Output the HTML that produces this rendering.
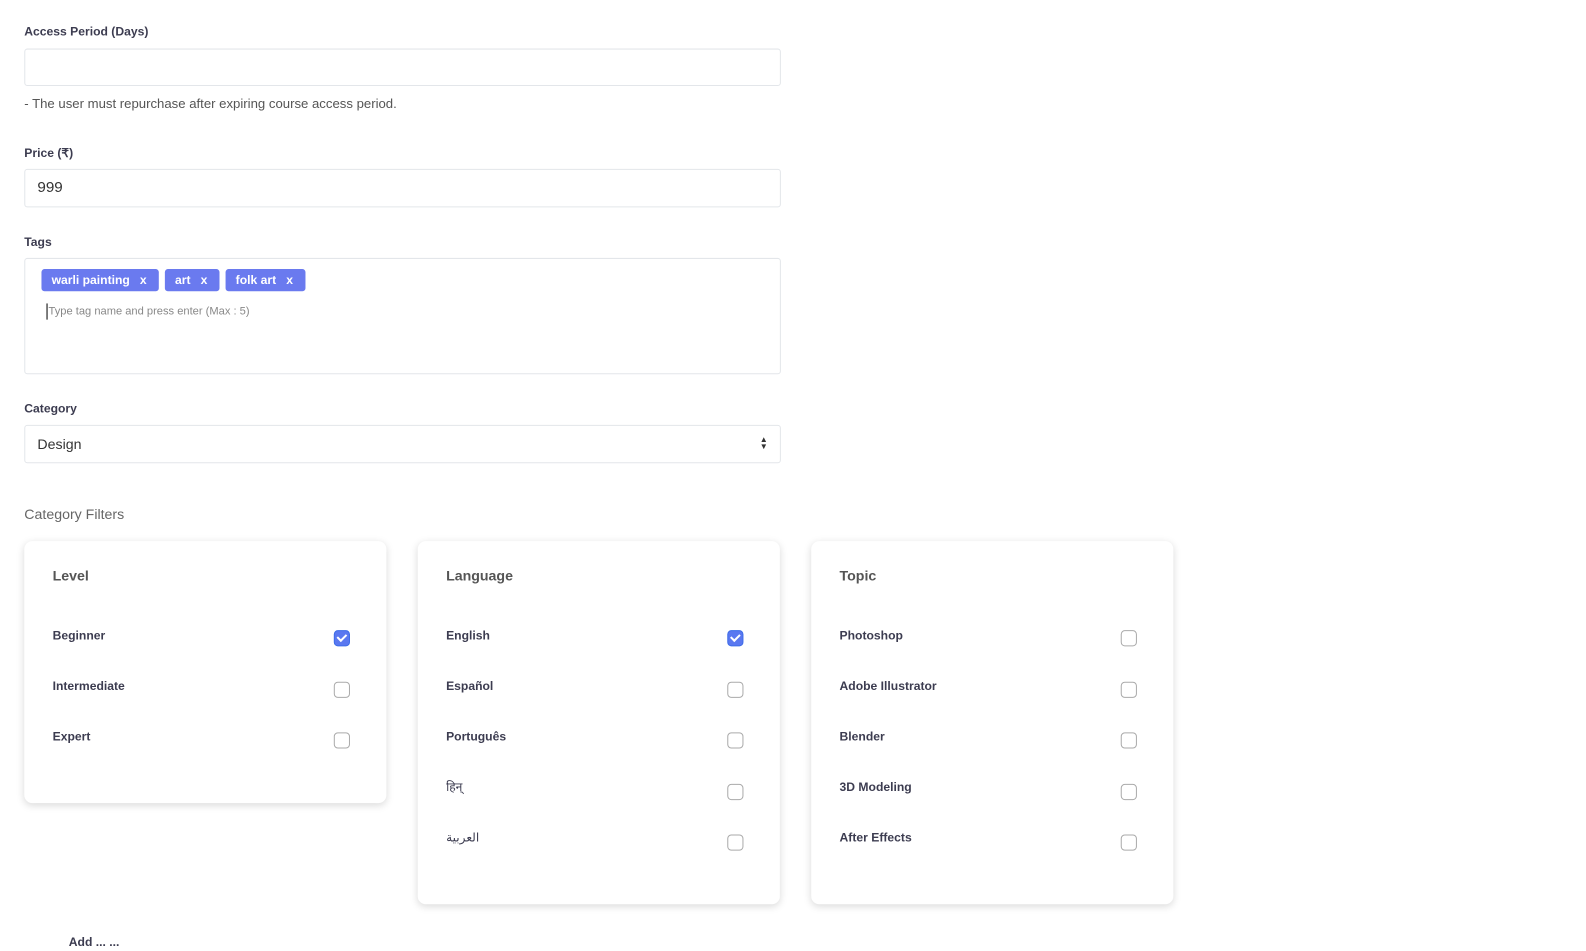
<!DOCTYPE html><html><head><meta charset="utf-8"><style>
*{box-sizing:border-box;margin:0;padding:0}
body{width:1586px;height:940px;background:#fff;font-family:"Liberation Sans","Noto Sans CJK SC",sans-serif;color:#333;position:relative;overflow:hidden}
#w{position:absolute;left:0;top:0;width:1586px;height:940px;transform:scale(1.0115);transform-origin:0 0}
.a{position:absolute}
.lbl{font-size:12px;font-weight:bold;color:#3c3c50}
.inp{position:absolute;left:24px;width:748px;border:1px solid #e3e6ea;border-radius:3px;background:#fff}
.tag{position:absolute;top:266px;height:22px;background:#6a7aef;color:#fff;font-size:12px;font-weight:bold;border-radius:3px;line-height:22px;padding-left:10px}
.card{position:absolute;width:358px;background:#fff;border-radius:8px;box-shadow:0 2px 8px rgba(0,0,0,.15)}
.card h4{position:absolute;left:28px;top:26px;font-size:14px;color:#555;font-weight:bold}
.row{position:absolute;left:28px;font-size:12px;font-weight:bold;color:#3c3c50}
.cb{position:absolute;left:306px;width:16px;height:16px;border:1.5px solid #aaa;border-radius:4px}
.cb.on{background:#5a78f0;border-color:#3d6ce8}
.cb.on::after{content:"";position:absolute;left:4px;top:1px;width:4px;height:7px;border:solid #fff;border-width:0 2px 2px 0;transform:rotate(45deg)}
</style></head><body><div id="w">
<div class="a lbl" style="left:24px;top:24px">Access Period (Days)</div>
<div class="inp" style="top:48px;height:37px"></div>
<div class="a" style="left:24px;top:95px;font-size:13px;color:#555">- The user must repurchase after expiring course access period.</div>
<div class="a lbl" style="left:24px;top:144px">Price (₹)</div>
<div class="inp" style="top:167px;height:38px;padding:9px 12px;font-size:15px;color:#333">999</div>
<div class="a lbl" style="left:24px;top:232px">Tags</div>
<div class="inp" style="top:255px;height:115px"></div>
<div class="tag" style="left:41px;width:116px">warli painting &nbsp;&nbsp;x</div>
<div class="tag" style="left:163px;width:54px">art &nbsp;&nbsp;x</div>
<div class="tag" style="left:223px;width:79px">folk art &nbsp;&nbsp;x</div>
<div class="a" style="left:46px;top:300px;width:1px;height:16px;background:#000"></div>
<div class="a" style="left:48px;top:302px;font-size:11px;color:#888">Type tag name and press enter (Max : 5)</div>
<div class="a lbl" style="left:24px;top:397px">Category</div>
<div class="inp" style="top:420px;height:38px;padding:10px 12px;font-size:14px;color:#333">Design
<span style="position:absolute;right:12px;top:10px;font-size:8px;line-height:7px;color:#333">▲<br>▼</span></div>
<div class="a" style="left:24px;top:500px;font-size:14px;color:#666">Category Filters</div>

<div class="card" style="left:24px;top:535px;height:259px"><h4>Level</h4>
<div class="row" style="top:86px">Beginner</div><div class="cb on" style="top:88px"></div>
<div class="row" style="top:136px">Intermediate</div><div class="cb" style="top:139px"></div>
<div class="row" style="top:186px">Expert</div><div class="cb" style="top:189px"></div>
</div>
<div class="card" style="left:413px;top:535px;height:359px"><h4>Language</h4>
<div class="row" style="top:86px">English</div><div class="cb on" style="top:88px"></div>
<div class="row" style="top:136px">Español</div><div class="cb" style="top:139px"></div>
<div class="row" style="top:186px">Português</div><div class="cb" style="top:189px"></div>
<div class="row" style="top:234px;font-family:'DejaVu Sans',sans-serif;font-weight:normal">हिन्</div><div class="cb" style="top:240px"></div>
<div class="row" style="top:286px;font-family:'DejaVu Sans',sans-serif;font-weight:normal">العربية</div><div class="cb" style="top:290px"></div>
</div>
<div class="card" style="left:802px;top:535px;height:359px"><h4>Topic</h4>
<div class="row" style="top:86px">Photoshop</div><div class="cb" style="top:88px"></div>
<div class="row" style="top:136px">Adobe Illustrator</div><div class="cb" style="top:139px"></div>
<div class="row" style="top:186px">Blender</div><div class="cb" style="top:189px"></div>
<div class="row" style="top:236px">3D Modeling</div><div class="cb" style="top:240px"></div>
<div class="row" style="top:286px">After Effects</div><div class="cb" style="top:290px"></div>
</div>
<div class="a lbl" style="left:68px;top:924px">Add ... ...</div>
</div></body></html>
